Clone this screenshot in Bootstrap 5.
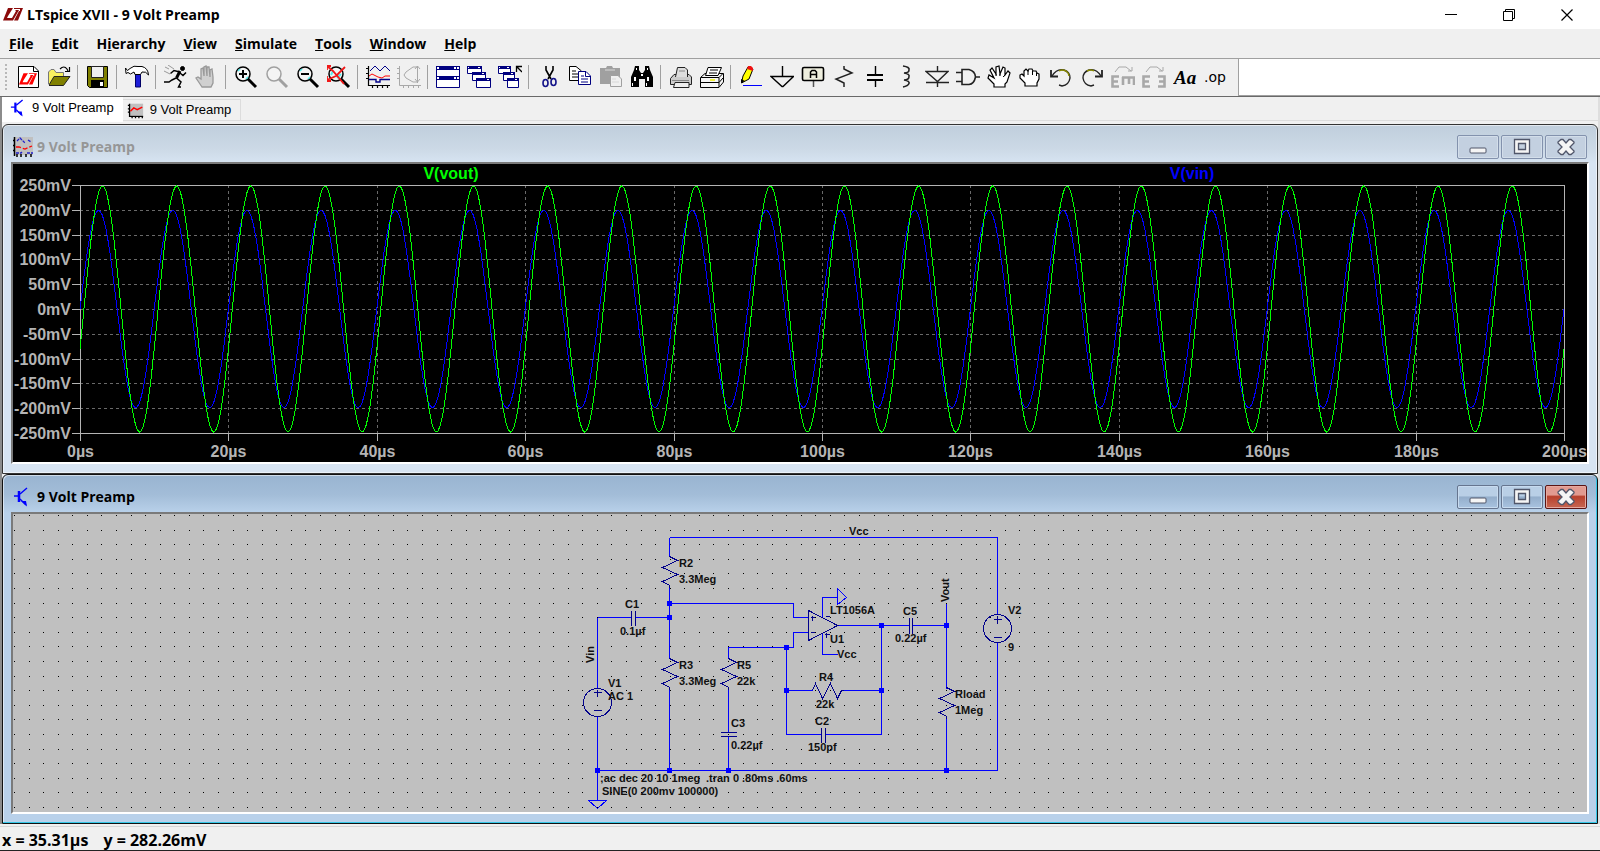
<!DOCTYPE html>
<html lang="en">
<head>
<meta charset="utf-8">
<meta name="viewport" content="width=device-width, initial-scale=1">
<title>LTspice XVII - 9 Volt Preamp</title>
<link href="https://cdn.jsdelivr.net/npm/bootstrap@5.3.0/dist/css/bootstrap.min.css" rel="stylesheet">
<style>
  body { font-family: "Open Sans", "Noto Sans", sans-serif; font-size: 14px; font-weight: 700; line-height: 20px; color: #000; background: #f0f0f0; }
  svg { display: block; flex: none; }
  .title-bar { height: 29px; background: #fff; padding-left: 3px; }
  .title-bar h1 { font-size: 14px; line-height: 20px; font-weight: 700; }
  .cap-btn { width: 58px; height: 29px; border: 0; background: none; padding: 0; }
  .menu-bar { height: 30px; padding-left: 9px; border-bottom: 1px solid #a0a0a0; gap: 18px; }
  .menu-bar a { color: #000; text-decoration: none; }
  .tool-row { background: #fff; height: 38px; border-bottom: 1px solid #696969; box-shadow: inset 0 -1px #a0a0a0; }
  .tool-bar { background: #f0f0f0; padding: 0 7px 1px 5px; border-right: 1px solid #a0a0a0; }
  .tool-bar button { width: 31px; height: 36px; border: 0; background: none; padding: 0; display: flex; align-items: center; justify-content: center; }
  .grip { width: 7px; height: 26px; background: radial-gradient(circle at 1px 1px, #b8b8b8 1px, transparent 1px) 0 0 / 7px 4px; }
  .tool-sep { width: 8px; height: 24px; border-left: 1px solid #a0a0a0; margin-left: 3px; margin-right: -3px; }
  .mdi { border-left: 2px solid #8c8c8c; border-right: 2px solid #dedede; min-height: 0; }
  .doc-tabs { height: 27px; background: #f0f0f0; }
  .doc-tabs button { border: 0; font: 400 13px/20px "Liberation Sans", Arial, sans-serif; color: #000; padding: 0 9px 0 8px; gap: 6px; }
  .doc-tabs .is-front { background: #fff; height: 25px; padding-bottom: 3px; }
  .doc-tabs .is-back { background: #f0f0f0; border: 1px solid #dcdcdc; border-left: 0; height: 22px; padding-left: 4px; margin-top: 2px; }
  .tab-rest { border-bottom: 1px solid #dcdcdc; height: 24px; }
  .child { flex: 1 1 0; min-height: 0; border: 1px solid #333; border-radius: 6px 6px 0 0; padding: 0 8px 9px; box-shadow: inset 0 0 0 1px #fff8; }
  .child.is-idle { background: linear-gradient(#c0cedc, #ccd9e6 24px, #d7e4f2 38px); color: #969696; }
  .child.is-live { background: linear-gradient(#99b4d1, #a3bdd8 20px, #b9d1ea 38px); border-color: #111; box-shadow: inset -1px -1px #35c8e8, inset 1px 1px #fff8; }
  .child header { height: 37px; padding: 7px 2px 0; }
  .child h2 { font-size: 14px; line-height: 20px; font-weight: 700; }
  .pane { border: 2px solid #7a7a7a; border-right-color: #fff; border-bottom-color: #fff; min-height: 0; overflow: hidden; }
  .pane svg { width: 100%; height: 100%; }
  .frame-btns { gap: 2px; }
  .frame-btn { width: 42px; height: 24px; padding: 0; border: 1px solid #8392ad; border-radius: 2px; background: #c3d0e0; box-shadow: inset 0 0 0 1px #d3deea; display: flex; align-items: center; justify-content: center; }
  .is-live .frame-btn { border-color: #66758f; background: linear-gradient(#b9cfe6 45%, #94aecb 50%, #a9c3e0); box-shadow: inset 0 0 0 1px #c8dbef; }
  .is-live .frame-btn.is-close { border-color: #5a1414; background: linear-gradient(#e19a90 40%, #b8402c 48%, #c4604c 90%); box-shadow: inset 0 0 0 1px #e5a9a0; }
  .plot { background: #000; }
  .plot text { font: bold 16px "Liberation Sans", Arial, sans-serif; fill: #b4b4b4; }
  .sheet { background: #c0c0c0; }
  .sheet text { font: bold 11px "Liberation Sans", Arial, sans-serif; fill: #111; }
  .status { height: 25px; padding: 3px 0 0 2px; border-top: 1px solid #d7d7d7; border-bottom: 1px solid #222; gap: 15px; margin-top: 2px; font-size: 16px; }
</style>
</head>
<body>
<svg width="0" height="0" class="position-absolute" aria-hidden="true">
  <symbol id="lt" viewBox="0 0 20 13"><path d="M5 0H10L5 8L4 10H9L13 3H12L13 2H16L10 12.500H0ZM11 0H20L15 12.500H11L16 3H17V1H11Z" fill="currentColor"/></symbol>
  <symbol id="bjt" viewBox="0 0 20 20"><path d="M1 9H6M7 7L14 1M7 12L13 18" stroke="#00f" stroke-width="1.400" fill="none"/><path d="M6 4V15" stroke="#00f" stroke-width="2.500"/><path d="M8 14L14 19.500L13 14Z" fill="#00f"/></symbol>
  <symbol id="wave" viewBox="0 0 20 20"><path d="M3 2H19V16H3Z" fill="#c0c0c0"/><path d="M3 2V17H19M1 4H3M1 8H3M1 12H3M6 17V19M10 17V19M14 17V19M18 17V19" stroke="#000" stroke-width="1.500" fill="none"/><path d="M4 11L8 7L12 9L18 6" stroke="#f00" stroke-width="1.700" fill="none"/></symbol>
  <symbol id="lens" viewBox="0 0 24 24"><circle cx="9" cy="9" r="7" fill="#f4f4f4" stroke="currentColor" stroke-width="1.500"/><path d="M14 14L22 22" stroke="currentColor" stroke-width="3"/></symbol>
  <symbol id="min" viewBox="0 0 20 18"><rect x="2" y="10" width="16" height="5" rx="1" fill="#f5f5f5" stroke="#50566a"/></symbol>
  <symbol id="max" viewBox="0 0 20 18"><path d="M2.500 1.500H17.500V15.500H2.500ZM6.500 5.500V11.500H13.500V5.500Z" fill="#f5f5f5" fill-rule="evenodd" stroke="#50566a" stroke-width="1.300"/></symbol>
  <symbol id="cross" viewBox="0 0 20 18"><path d="M2 4L5 1.500H7L10 5L13 1.500H15L18 4V5L14 9L18 13V14L15 16.500H13L10 13L7 16.500H5L2 14V13L6 9L2 5Z" fill="#f5f5f5" stroke="#50566a" stroke-width="1.300"/></symbol>
</svg>

<div class="d-flex flex-column vh-100">
  <div class="title-bar d-flex align-items-center">
    <svg width="20" height="13" style="color:#8b0a0a"><use href="#lt"/></svg>
    <h1 class="m-0 ms-1 flex-grow-1">LTspice XVII - 9 Volt Preamp</h1>
    <button class="cap-btn" aria-label="Minimize"><svg class="mx-auto" width="12" height="12"><path d="M0 5.500H12" stroke="#000"/></svg></button>
    <button class="cap-btn" aria-label="Restore"><svg class="mx-auto" width="12" height="12"><path d="M.5 2.500H9.500V11.500H.5ZM2.500 2.500V.5H11.500V9.500H9.500" fill="none" stroke="#000"/></svg></button>
    <button class="cap-btn me-1" aria-label="Close"><svg class="mx-auto" width="12" height="12"><path d="M.5 .5L11.500 11.500M11.500 .5L.5 11.500" stroke="#000" stroke-width="1.200"/></svg></button>
  </div>

  <nav class="menu-bar d-flex align-items-center" aria-label="Main menu">
    <a href="#"><u>F</u>ile</a><a href="#"><u>E</u>dit</a><a href="#">H<u>i</u>erarchy</a><a href="#"><u>V</u>iew</a><a href="#"><u>S</u>imulate</a><a href="#"><u>T</u>ools</a><a href="#"><u>W</u>indow</a><a href="#"><u>H</u>elp</a>
  </nav>

  <div class="tool-row d-flex">
    <div class="tool-bar d-flex align-items-center" role="toolbar" aria-label="Tools">
      <div class="grip"></div>
      <button aria-label="New"><svg width="24" height="24"><path d="M2.500 1.500H18L22.500 6V22.500H2.500Z" fill="#fff" stroke="#000"/><path d="M17.500 1.500V6.500H22" fill="none" stroke="#000"/><use href="#lt" x="3" y="8" width="18" height="12" color="#f00"/></svg></button>
      <button aria-label="Open"><svg width="24" height="24"><path d="M1.500 19V7L4 4.500H7L9 7.500H16.500V11" fill="#f8f060" stroke="#777"/><path d="M2 20L7 11.500H23L16.500 20.500H2" fill="#808000" stroke="#222"/><path d="M13 4Q17 0 20 4L21 6M22.500 2V6.500H18" fill="none" stroke="#000" stroke-width="1.200"/></svg></button>
      <div class="tool-sep"></div>
      <button aria-label="Save"><svg width="24" height="24"><path d="M1.500 1.500H21.500V22.500H3.500L1.500 20.500Z" fill="#808000" stroke="#000"/><path d="M5.500 1.500H17.500V12.500H5.500Z" fill="#f0f0f0" stroke="#222"/><path d="M5 15H18V22H5Z"/><path d="M14 17H17V21H14Z" fill="#fff"/></svg></button>
      <div class="tool-sep"></div>
      <button aria-label="Control panel"><svg width="24" height="24"><path d="M10.500 9H15.500V22H10.500Z" fill="#1c1cd8" stroke="#006"/><path d="M.5 3L2.500 5.500L5 3.500Q9 0 13 1.500H17Q23 3 23.500 10Q21 6 17 7L15.500 9.500H10L9 7L5.500 9L3 7.500L1 8.500Z" fill="#fff" stroke="#000"/></svg></button>
      <div class="tool-sep"></div>
      <button aria-label="Run"><svg width="24" height="24" fill="none" stroke="#000"><circle cx="18.500" cy="3.500" r="2" fill="#000"/><path d="M16 6L12.500 13" stroke-width="3"/><path d="M16 7L10 5.500L6.500 8.500M16 8L19 10.500L22 7.500M12 13L8 15L5 17L0 17M12.500 13L17 17L14.500 22H17" stroke-width="1.500"/><path d="M1 2L5 4M4 0L10 4M0 6L6 9" stroke="#999"/></svg></button>
      <button aria-label="Halt"><svg width="24" height="24"><path d="M7 22L3 16L1 13L3 12L6 14V4L8 3L9 11V2L11 1L12 11V2L14 2L15 12V5L17 4L18 12V18L16 22Z" fill="#d0d0d0" stroke="#999" stroke-width="1.300"/></svg></button>
      <div class="tool-sep"></div>
      <button aria-label="Zoom in"><svg width="24" height="24"><use href="#lens"/><path d="M9 5V13M5 9H13" stroke="#000" stroke-width="2"/><path d="M4 6L6 4M12 14L14 12" stroke="#5ee" stroke-width="1.500"/></svg></button>
      <button aria-label="Pan"><svg width="24" height="24" style="color:#a0a0a0"><use href="#lens"/></svg></button>
      <button aria-label="Zoom out"><svg width="24" height="24"><use href="#lens"/><path d="M5 9H13" stroke="#000" stroke-width="2"/><path d="M4 6L6 4M12 14L14 12" stroke="#5ee" stroke-width="1.500"/></svg></button>
      <button aria-label="Zoom to fit"><svg width="24" height="24"><use href="#lens"/><path d="M6 6L4 10M10 13L14 9" stroke="#5ee" stroke-width="2"/><path d="M0 1L6 6L17 19M18 2L9 11L0 15M0 5V1H4M0 11V16H4" fill="none" stroke="#f01818" stroke-width="1.800"/></svg></button>
      <div class="tool-sep"></div>
      <button aria-label="Autorange"><svg width="24" height="24" fill="none"><path d="M2.500 1V20.500H24M0 3.500H2M0 8.500H2M0 13.500H2M6.500 20V23M11.500 20V23M16.500 20V23M21.500 20V23" stroke="#000" stroke-width="1.200"/><path d="M4 6L9 1L14 6L19 1L24 6" stroke="#008"/><path d="M3 11L6 9L12 12L16 13L19 11H24" stroke="#f00"/><path d="M3 14.500H10V17H14V14.500H24" stroke="#008" stroke-width="1.400"/></svg></button>
      <button aria-label="FFT"><svg width="24" height="24" fill="none" stroke="#a8a8a8"><path d="M2.500 1V20.500H24M0 3.500H2M0 8.500H2M0 13.500H2M6.500 20V23M11.500 20V23M16.500 20V23M21.500 20V23"/><path d="M21 2H16L9 7L7 10L9 13L16 17H21M20.500 1V18M18 4L20.500 1L23 4M18 14L20.500 17L23 14"/></svg></button>
      <div class="tool-sep"></div>
      <button aria-label="Tile"><svg width="24" height="24"><path d="M.5 1.500H23.500V22.500H.5Z" fill="#fff" stroke="#000080"/><path d="M0 1H24V5H0ZM0 11H24V15H0Z" fill="#000080"/><path d="M1 2H3V4H1ZM18 2H20V4H18ZM21 2H23V4H21ZM1 12H3V14H1ZM18 12H20V14H18ZM21 12H23V14H21Z" fill="#fff"/></svg></button>
      <button aria-label="Cascade"><svg width="24" height="24"><g fill="#fff" stroke="#000080"><path d="M.5 1.500H14.500V8.500H.5Z"/><path d="M5.500 7.500H18.500V15.500H5.500Z"/><path d="M9.500 13.500H23.500V22.500H9.500Z"/></g><path d="M0 1H15V4H0ZM5 7H19V10H5ZM9 13H24V16H9Z" fill="#000080"/><path d="M1 2H2V3H1ZM11 2H13V3H11ZM15 8H17V9H15ZM20 14H22V15H20Z" fill="#fff"/></svg></button>
      <button aria-label="Close all"><svg width="24" height="24"><g fill="#fff" stroke="#000080"><path d="M.5 1.500H12.500V8.500H.5Z"/><path d="M5.500 7.500H16.500V15.500H5.500Z"/><path d="M9.500 13.500H20.500V22.500H9.500Z"/></g><path d="M0 1H13V4H0ZM5 7H17V10H5ZM9 13H21V16H9Z" fill="#000080"/><path d="M1 2H2V3H1ZM9 2H11V3H9ZM13 8H15V9H13ZM17 14H19V15H17Z" fill="#fff"/><path d="M18.500 7V1.500H24M19 2L24 7" stroke="#000" stroke-width="1.300" fill="none"/></svg></button>
      <div class="tool-sep"></div>
      <button aria-label="Cut"><svg width="24" height="24" fill="none"><path d="M9 1V5L14 14M16 1V5L11 14" stroke="#000" stroke-width="1.600"/><ellipse cx="8.500" cy="18" rx="2.500" ry="3.500" stroke="#15158a" stroke-width="1.600"/><ellipse cx="16.500" cy="17" rx="2.500" ry="3.500" stroke="#15158a" stroke-width="1.600"/></svg></button>
      <button aria-label="Copy"><svg width="24" height="24"><path d="M1.500 1.500H8L13.500 6V15.500H1.500Z" fill="#fff" stroke="#000"/><path d="M4 6H8M4 9H10M4 12H10" stroke="#000"/><path d="M10.500 6.500H18L22.500 11V19.500H10.500Z" fill="#fff" stroke="#000080"/><path d="M17.500 7V11.500H22M13 11H16M13 14H20M13 17H20" stroke="#000080" fill="none"/></svg></button>
      <button aria-label="Paste"><svg width="24" height="24"><path d="M1 3H7L8 1H13L14 3H21V19H1Z" fill="#a0a0a0"/><path d="M11.500 10.500H19L22.500 14V21.500H11.500Z" fill="#f0f0f0" stroke="#a0a0a0"/><path d="M6 5H16M13 14H17M13 17H20" stroke="#d8d8d8"/></svg></button>
      <button aria-label="Find"><svg width="24" height="24"><path d="M5 1H9V5L11 8H13L15 5V1H19L20 5L23 12V22H15V14H9V22H1V12L4 5Z"/><path d="M6 3H7V5H6ZM17 3H18V5H17ZM4 12H6V16H4ZM17 12H19V16H17ZM11 9H13V11H11ZM2 18H3V21H2ZM16 18H17V21H16Z" fill="#fff"/></svg></button>
      <div class="tool-sep"></div>
      <button aria-label="Print"><svg width="24" height="24"><path d="M1.500 13.500L5 9.500H20L22.500 12V19.500H1.500Z" fill="#ccc" stroke="#222"/><path d="M6.500 12L8.500 2.500H16L18.500 5V12" fill="#ddd" stroke="#222"/><path d="M6 17.500H20V22.500H4.500Z" fill="#eee" stroke="#222"/><path d="M3 15.500H20M10 6H16" stroke="#888"/></svg></button>
      <button aria-label="Print setup"><svg width="24" height="24"><path d="M.5 12.500L5 8.500H23.500V17L19 22.500H.5Z" fill="#f6f6f6" stroke="#000"/><path d="M1 12.500H19V22M19 12.500L23 8.500M1 17.500H19L23 13" stroke="#000" fill="none"/><path d="M5.500 10.500L8 2.500H21.500L18 10.500Z" fill="#fff" stroke="#000"/><path d="M10 5H18M9 8H17" stroke="#000"/><path d="M10 15H15" stroke="#ee0" stroke-width="1.500"/></svg></button>
      <div class="tool-sep"></div>
      <button aria-label="Wire"><svg width="24" height="24"><path d="M2.500 18L4 11L9 2L14 4L10 14Z" fill="#ff0" stroke="#000"/><path d="M9 1H12L14 3V6L8 4Z" fill="#e11"/><path d="M2 18V14L6 16Z"/><path d="M4 20.500H23" stroke="#00f"/></svg></button>
      <button aria-label="Ground"><svg width="24" height="24"><path d="M12.500 1V11.500M1 11.500H23.500L13 21.500H12Z" fill="none" stroke="#000" stroke-width="1.400"/></svg></button>
      <button aria-label="Label net"><svg width="24" height="24"><path d="M12.500 16V22" stroke="#555" stroke-width="1.500"/><rect x="1.500" y="2.500" width="21" height="13" rx="1.500" fill="#eeeede" stroke="#000" stroke-width="1.600"/><path d="M9.500 13V7L11 5.500H14L15.500 7V13M9.500 9.500H15.500" stroke="#000" stroke-width="1.500" fill="none"/></svg></button>
      <button aria-label="Resistor"><svg width="24" height="24"><path d="M12 1V4L20 8L4 14L12 18V22" fill="none" stroke="#222" stroke-width="1.500"/></svg></button>
      <button aria-label="Capacitor"><svg width="24" height="24"><path d="M12.500 1V9M12.500 15V22" stroke="#000" stroke-width="1.400"/><path d="M4 10H20M4 15H20" stroke="#000" stroke-width="2"/></svg></button>
      <button aria-label="Inductor"><svg width="24" height="24"><path d="M9 1Q16 2 15 5Q15 8 10 8Q16 9 15 11.500Q15 15 10 15Q16 16 15 18.500Q14 21 9 22" fill="none" stroke="#222" stroke-width="1.600"/></svg></button>
      <button aria-label="Diode"><svg width="24" height="24" fill="none" stroke="#222" stroke-width="1.400"><path d="M12.500 1V6M12.500 17V22M1 6.500H23L12.500 16.500ZM1 17.500H24"/></svg></button>
      <button aria-label="Component"><svg width="24" height="24"><path d="M6 4.500H13Q19 6 19.500 12Q18 19 13 19.500H6ZM0 7.500H6M0 16.500H6M20 12H24" fill="none" stroke="#222" stroke-width="1.600"/></svg></button>
      <button aria-label="Move"><svg width="24" height="24"><path d="M7 22V19L1 13L2 10L7 13L3 5L5 3L9 9V2L12 1L13 9L16 2L18 3L18 10L21 6L23 8L20 17L18 19V22Z" fill="#fff" stroke="#000" stroke-width="1.200"/><path d="M9 9V11M13 9V11M18 10L16 12" stroke="#000"/></svg></button>
      <button aria-label="Drag"><svg width="24" height="24"><path d="M7 21V18L2 13V10L4 9L6 11V6L8 4L10 6L11 4L14 4L15 6L18 6L19 8L21 9V14L19 18V21Z" fill="#fff" stroke="#000" stroke-width="1.200"/><path d="M10 6V10M14.500 6V10M18.500 8V11" stroke="#000"/></svg></button>
      <button aria-label="Undo"><svg width="24" height="24" fill="none" stroke="#222" stroke-width="1.400"><path d="M3 11Q8 3 15 5Q21 7 21 13Q20 20 13 21L10 20"/><path d="M10 6Q13 4 17 6Q20 8 20 11" stroke="#880"/><path d="M2 5V11.500H9" stroke-width="1.800"/></svg></button>
      <button aria-label="Redo"><svg width="24" height="24" fill="none" stroke="#222" stroke-width="1.400"><path d="M21 11Q16 3 9 5Q3 7 3 13Q4 20 11 21L14 20"/><path d="M14 6Q11 4 7 6" stroke="#880"/><path d="M22 5V11.500H15" stroke-width="1.800"/></svg></button>
      <button aria-label="Rotate"><svg width="24" height="24" fill="none" stroke="#a8a8a8"><path d="M4 7L8 2H15L20 6M21 2V6H17"/><path d="M8 11.500H1.500V21.500H8M2 16.500H7M11 12.500H24M12 12V20M18 12V19M23 12V20" stroke-width="2.600"/></svg></button>
      <button aria-label="Mirror"><svg width="24" height="24" fill="none" stroke="#a8a8a8"><path d="M4 7L8 2H15L20 6M21 2V6H17"/><path d="M8 11.500H1.500V21.500H8M2 16.500H7M16 11.500H22.500V21.500H16M17 16.500H23" stroke-width="2.600"/></svg></button>
      <button aria-label="Text"><svg width="24" height="24"><text x="1" y="19" font-family="Liberation Serif, serif" font-size="19" font-weight="700" font-style="italic">Aa</text></svg></button>
      <button aria-label="SPICE directive"><svg width="24" height="24"><text x="0" y="17" font-family="DejaVu Sans, sans-serif" font-size="14" font-weight="400">.op</text></svg></button>
    </div>
  </div>

  <main class="mdi flex-grow-1 d-flex flex-column">
    <div class="doc-tabs d-flex">
      <button class="is-front d-flex align-items-center"><svg width="16" height="18"><use href="#bjt" width="18" height="18"/></svg>9 Volt Preamp</button>
      <button class="is-back d-flex align-items-center"><svg width="17" height="17"><use href="#wave" width="17" height="17"/></svg>9 Volt Preamp</button>
      <div class="tab-rest flex-grow-1"></div>
    </div>

    <section class="child is-idle d-flex flex-column">
      <header class="d-flex align-items-center">
        <svg width="20" height="20"><path d="M2 0H20V18H2Z" fill="#c0c0c0"/><path d="M1.500 0V19M0 3.500H2M0 8.500H2M0 13.500H2M4 17V20M8 17V20M13 17V20M18 17V20" stroke="#000" stroke-width="1.500"/><path d="M4 4L7 1L12 6M15 3L18 5M3 16H8L9 15M14 16H20" stroke="#22c" stroke-width="1.300" fill="none" stroke-dasharray="3 1"/><path d="M3 10H6L12 12L19 9" stroke="#f00" stroke-width="1.300" fill="none" stroke-dasharray="5 2"/></svg>
        <h2 class="m-0 ms-1 flex-grow-1">9 Volt Preamp</h2>
        <div class="frame-btns d-flex">
          <button class="frame-btn" aria-label="Minimize"><svg width="20" height="18"><use href="#min"/></svg></button>
          <button class="frame-btn" aria-label="Maximize"><svg width="20" height="18"><use href="#max"/></svg></button>
          <button class="frame-btn" aria-label="Close"><svg width="20" height="18"><use href="#cross"/></svg></button>
        </div>
      </header>
      <div class="pane plot flex-grow-1"><svg id="plot" shape-rendering="crispEdges"></svg></div>
    </section>

    <section class="child is-live d-flex flex-column">
      <header class="d-flex align-items-center">
        <svg width="20" height="20"><use href="#bjt"/></svg>
        <h2 class="m-0 ms-1 flex-grow-1">9 Volt Preamp</h2>
        <div class="frame-btns d-flex">
          <button class="frame-btn" aria-label="Minimize"><svg width="20" height="18"><use href="#min"/></svg></button>
          <button class="frame-btn" aria-label="Maximize"><svg width="20" height="18"><use href="#max"/></svg></button>
          <button class="frame-btn is-close" aria-label="Close"><svg width="20" height="18"><use href="#cross"/></svg></button>
        </div>
      </header>
      <div class="pane sheet flex-grow-1"><svg id="sheet" shape-rendering="crispEdges"></svg></div>
    </section>
  </main>

  <footer class="status d-flex align-items-center"><span>x = 35.31µs</span><span>y = 282.26mV</span></footer>
</div>

<script src="https://cdn.jsdelivr.net/npm/bootstrap@5.3.0/dist/js/bootstrap.bundle.min.js"></script>
<script>
const plot = document.getElementById('plot');
const sheet = document.getElementById('sheet');

/* Transient plot: 0 to 200 µs, -250 to 250 mV */
function drawPlot() {
  const w = plot.clientWidth, h = plot.clientHeight;
  const L = 67, R = w - 23, T = 21, B = h - 29;
  const X = t => L + (R - L) * t / 200, Y = v => (T + B) / 2 - (B - T) * v / 500;
  const snap = n => Math.round(n) + .5;
  let grid = '', axis = '', s = '';
  for (let i = 0; i <= 10; i++) {
    const y = snap(Y(250 - i * 50)), x = snap(X(i * 20));
    if (i && i < 10) grid += `M${L} ${y}H${R}M${x} ${T}V${B}`;
    axis += `M${L - 8} ${y}H${L}M${x} ${B}V${B + 8}`;
    s += `<text x="${L - 9}" y="${Math.round(y) + 5}" text-anchor="end">${250 - i * 50}mV</text>`;
    s += `<text x="${x}" y="${B + 24}" text-anchor="middle">${i * 20}µs</text>`;
  }
  const wave = (amp, lag) => {
    let d = '';
    for (let t = 0; t <= 200.01; t += .25) d += (t ? 'L' : 'M') + X(t).toFixed(1) + ' ' + Y(amp * Math.sin(Math.PI * (t - lag) / 5)).toFixed(1);
    return d;
  };
  plot.innerHTML = `<path d="${grid}" fill="none" stroke="#696969" stroke-dasharray="3 3"/>
    <path d="M${L + .5} ${T + .5}H${R + .5}V${B + .5}H${L + .5}Z${axis}" fill="none" stroke="#b4b4b4"/>
    <path d="${wave(199, 0)}" fill="none" stroke="#00f"/><path d="${wave(248, .53)}" fill="none" stroke="#0f0"/>${s}
    <text x="${Math.round(w * .278)}" y="15" text-anchor="middle" style="fill:#0f0">V(vout)</text>
    <text x="${Math.round(w * .749)}" y="15" text-anchor="middle" style="fill:#00f">V(vin)</text>`;
}

/* Schematic: wires, part symbols, junctions and labels on the sheet's own canvas */
const wires = 'M669 537H997V614M997 642V770H597M669 537V556M669 587V658M669 603H793V617H808M597 617H631M635 617H669M597 617V688M597 716V800M669 688V770M728 658V647H793V632H808M728 688V732M728 736V770M786 647V734H821M825 734H881V625M786 690H812M842 690H881M837 625H909M912 625H946M946 603V688M946 718V770M822 617V597H837M822 633V654H837M588 800H606L597 808ZM837 588V604L846 597Z';
const zig = (x, y) => `M${x} ${y}L${x + 8} ${y + 4}L${x - 7} ${y + 11}L${x + 8} ${y + 18}L${x - 7} ${y + 25}L${x} ${y + 29}V${y + 31}`;
const parts = zig(669, 556) + zig(669, 658) + zig(728, 658) + zig(946, 687) +
  'M812 690L815 683L822 698L830 683L837 698L841 690H843' +
  'M631 610V625M635 610V625M720 732H736M720 736H736M821 727V742M825 727V742M909 617V633M912 617V633' +
  'M808 610V640L837 625ZM810 617H814M812 615V620M810 632H814M825 616H829M824 634H829M826 632V637' +
  'M593 692H601M597 689V696M593 710H601M993 619H1001M997 615V623M993 637H1001';
const nodes = [[669,603],[669,617],[597,770],[669,770],[728,770],[946,770],[786,647],[786,690],[881,690],[881,625],[946,625]];
const labels = [['R2',679,567],['3.3Meg',679,583],['C1',625,608],['0.1µf',620,635],['V1',608,687],['AC 1',608,700],['R3',679,669],['3.3Meg',679,685],['R5',737,669],['22k',737,685],['C3',731,727],['0.22µf',731,749],[';ac dec 20 10 1meg',600,782],['.tran 0 .80ms .60ms',706,782],['SINE(0 200mv 100000)',602,795],['Vcc',849,535],['LT1056A',830,614],['U1',830,643],['Vcc',837,658],['C5',903,615],['0.22µf',895,642],['R4',819,681],['22k',816,708],['C2',815,725],['150pf',808,751],['Rload',955,698],['1Meg',955,714],['V2',1008,614],['9',1008,651]];
const upright = [['Vin',594,663],['Vout',949,602]];

function drawSheet() {
  const w = sheet.clientWidth, h = sheet.clientHeight;
  let dots = '';
  for (let j = 0; 1 + j * 14.6 < h; j++)
    for (let i = 0; 1 + i * 14.57 < w; i++) dots += `M${Math.round(1 + i * 14.57)} ${Math.round(1 + j * 14.6)}h1v1h-1z`;
  const dx = Math.round(w / 2) - 800, dy = -514;
  sheet.innerHTML = `<path d="${dots}"/><g transform="translate(${dx} ${dy})">
    <g transform="translate(.5 .5)" fill="none"><path d="${wires}" stroke="#00f"/><path d="${parts}" stroke="#00008b"/>
    <circle cx="597" cy="702" r="14" stroke="#00008b"/><circle cx="997" cy="628" r="14" stroke="#00008b"/></g>
    ${nodes.map(([x, y]) => `<rect x="${x - 2}" y="${y - 2}" width="5" height="5" fill="#00f"/>`).join('')}
    ${labels.map(([t, x, y]) => `<text x="${x}" y="${y}">${t}</text>`).join('')}
    ${upright.map(([t, x, y]) => `<text transform="translate(${x} ${y}) rotate(-90)">${t}</text>`).join('')}</g>`;
}
const draw = () => { drawPlot(); drawSheet(); };
draw();
addEventListener('resize', draw);
</script>
</body>
</html>
